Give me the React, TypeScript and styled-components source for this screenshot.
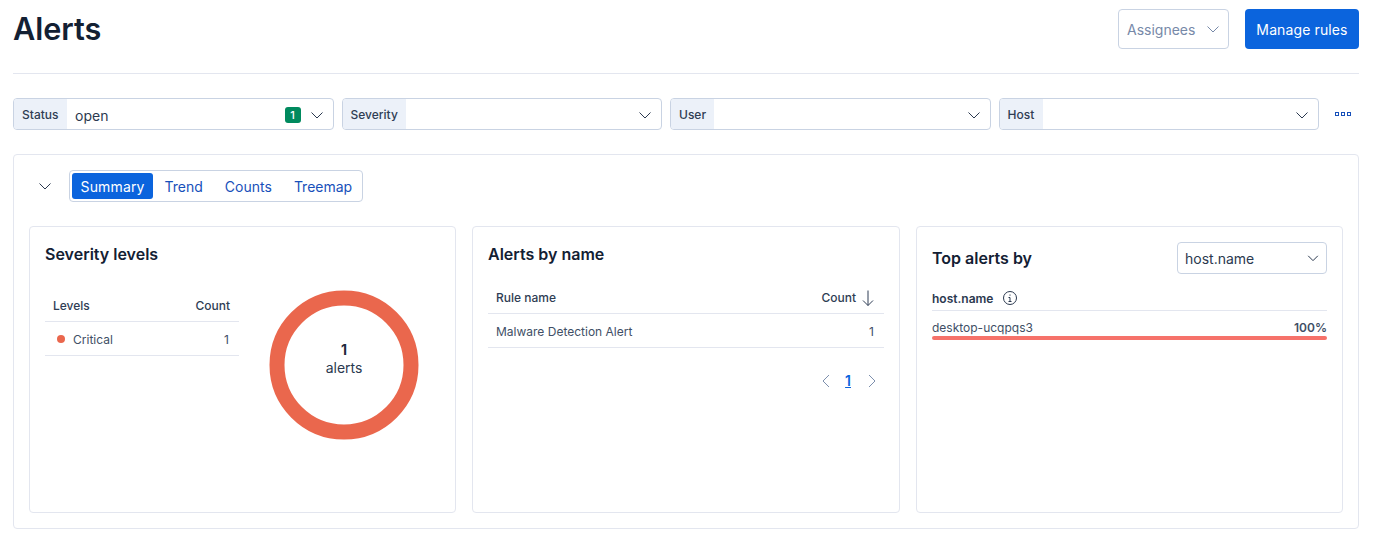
import React from "react";
import styled, { createGlobalStyle } from "styled-components";

const Global = createGlobalStyle`
  html, body { margin: 0; padding: 0; background: #fff; }
  body { font-family: Inter, "Liberation Sans", sans-serif; color: #1a1c21; }
  * { box-sizing: border-box; }
`;

const Page = styled.div`
  width: 1374px;
  height: 534px;
  padding: 0 15px 0 13px;
  overflow: hidden;
`;
const Header = styled.header`
  height: 74px;
  padding-top: 9px;
  display: flex;
  align-items: flex-start;
  border-bottom: 1px solid #e3e6ef;
`;
const Title = styled.h1`
  margin: 0;
  flex: 1;
  font-size: 30.6px;
  line-height: 40px;
  font-weight: 600;
  color: #132033;
`;
const HeaderActions = styled.div`
  display: flex;
  gap: 16px;
`;
const AssigneeSelect = styled.div`
  width: 111px;
  height: 40px;
  border: 1px solid #c9d3e3;
  border-radius: 4px;
  padding: 0 7px 0 8px;
  display: flex;
  align-items: center;
  justify-content: space-between;
  font-size: 14px;
  color: #7789a8;
`;
const PrimaryButton = styled.button`
  width: 114px;
  height: 40px;
  border: 0;
  border-radius: 4px;
  background: #0b64dd;
  color: #fff;
  font: 400 14px Inter, sans-serif;
  letter-spacing: 0.12px;
`;
const Filters = styled.div`
  margin-top: 24px;
  display: flex;
  align-items: center;
`;
const FilterGroup = styled.div`
  display: flex;
  gap: 8px;
  width: 1306px;
`;
const Filter = styled.div`
  flex: 1;
  height: 32px;
  display: flex;
  align-items: stretch;
  border: 1px solid #c9d3e3;
  border-radius: 4px;
  overflow: hidden;
`;
const FilterLabel = styled.span<{ $width: number }>`
  width: ${(p) => p.$width}px;
  background: #ecf1f9;
  padding-left: 8px;
  display: flex;
  align-items: center;
  font-size: 12px;
  font-weight: 500;
  color: #2f3d54;
`;
const FilterValue = styled.div`
  flex: 1;
  display: flex;
  align-items: center;
  padding: 1px 8px 0 8px;
  font-size: 14px;
  color: #2b394f;
  gap: 8px;
`;
const FilterText = styled.span`
  flex: 1;
  margin-top: 2px;
`;
const CountBadge = styled.span`
  width: 16px;
  height: 16px;
  border-radius: 3px;
  background: #008a5e;
  color: #fff;
  font-size: 11px;
  font-weight: 500;
  display: flex;
  align-items: center;
  justify-content: center;
`;
const MoreButton = styled.span`
  margin-left: 15px;
  display: flex;
  color: #1750ba;
`;
const Panel = styled.section`
  margin-top: 24px;
  height: 375px;
  border: 1px solid #e3e6ef;
  border-radius: 4px;
  padding: 15px;
`;
const TabRow = styled.div`
  display: flex;
  align-items: center;
  height: 32px;
`;
const Collapse = styled.span`
  width: 31px;
  margin-right: 9px;
  display: flex;
  justify-content: center;
  color: #2b394f;
`;
const Tabs = styled.div`
  height: 32px;
  border: 1px solid #c9d3e3;
  border-radius: 4px;
  padding: 2px;
  display: flex;
`;
const Tab = styled.span<{ $active?: boolean }>`
  height: 26px;
  border-radius: 3px;
  padding: 0 ${(p) => (p.$active ? "8.5px" : "10.5px 0 11.5px")};
  display: flex;
  align-items: center;
  font-size: 14px;
  font-weight: 400;
  letter-spacing: ${(p) => (p.$active ? "0.15px" : "0")};
  background: ${(p) => (p.$active ? "#0b64dd" : "transparent")};
  color: ${(p) => (p.$active ? "#fff" : "#1750ba")};
  &:last-child {
    padding-right: 8px;
  }
`;
const Cards = styled.div`
  margin-top: 24px;
  display: grid;
  grid-template-columns: 427px 428px 427px;
  gap: 16px;
`;
const Card = styled.article`
  height: 287px;
  border: 1px solid #e3e6ef;
  border-radius: 4px;
  padding: 15px;
`;
const CardTitle = styled.h3`
  margin: 0;
  font-size: 16px;
  line-height: 24px;
  font-weight: 600;
  color: #132033;
`;
const SeverityBody = styled.div`
  margin-top: 24px;
  display: flex;
`;
const MiniTable = styled.div`
  width: 194px;
`;
const HeadRow = styled.div`
  height: 32px;
  display: flex;
  align-items: center;
  justify-content: space-between;
  padding: 0 9px 0 8px;
  border-bottom: 1px solid #e3e6ef;
  font-size: 12px;
  font-weight: 500;
  color: #2f3d54;
`;
const BodyRow = styled.div`
  height: 34px;
  display: flex;
  align-items: center;
  justify-content: space-between;
  padding: 1px 10px 0 8px;
  border-bottom: 1px solid #e3e6ef;
  font-size: 12px;
  color: #414f66;
`;
const LevelCell = styled.span`
  display: flex;
  align-items: center;
  gap: 8px;
  padding-left: 4px;
`;
const Dot = styled.i`
  width: 8px;
  height: 8px;
  border-radius: 50%;
  background: #ea674d;
`;
const DonutWrap = styled.div`
  position: relative;
  margin: 0 0 0 30px;
  width: 150px;
  height: 150px;
`;
const DonutLabel = styled.div`
  position: absolute;
  inset: 0 0 13px;
  display: flex;
  flex-direction: column;
  align-items: center;
  justify-content: center;
  font-size: 14px;
  line-height: 18px;
  color: #2b394f;
`;
const DonutCount = styled.b`
  font-weight: 700;
  color: #1f2b3d;
`;
const NameTable = styled.div`
  margin-top: 16px;
`;
const SortHead = styled.span`
  display: flex;
  align-items: center;
  gap: 4px;
  margin-right: -1px;
`;
const Pager = styled.nav`
  margin-top: 24px;
  padding-right: 6px;
  display: flex;
  justify-content: flex-end;
  align-items: center;
  gap: 10px;
  color: #7d8fad;
`;
const PageNum = styled.a`
  font-size: 14px;
  font-weight: 600;
  color: #0b64dd;
  text-decoration: underline;
  padding: 0 5px 0 3px;
`;
const TopHead = styled.div`
  height: 32px;
  display: flex;
  align-items: center;
  justify-content: space-between;
`;
const FieldSelect = styled.div`
  width: 150px;
  height: 32px;
  border: 1px solid #c9d3e3;
  border-radius: 4px;
  padding: 0 6px 0 7px;
  display: flex;
  align-items: center;
  justify-content: space-between;
  font-size: 14px;
  color: #2b394f;
`;
const TopField = styled.div`
  margin-top: 12px;
  height: 25px;
  display: flex;
  align-items: center;
  gap: 9px;
  border-bottom: 1px solid #e3e6ef;
  font-size: 12px;
  font-weight: 600;
  color: #2b394f;
`;
const BarLabel = styled.div`
  margin-top: 9px;
  display: flex;
  justify-content: space-between;
  font-size: 12px;
  line-height: 16px;
  color: #414f66;
`;
const BarValue = styled.b`
  font-weight: 600;
`;
const Bar = styled.div`
  height: 4px;
  border-radius: 2px;
  background: #f6726a;
`;

const Chevron = ({ size = 16 }: { size?: number }) => (
  <svg width={size} height={size} viewBox="0 0 16 16" fill="none" stroke="currentColor" strokeWidth={16 / size}>
    <path d="M2.5 5.5 8 11l5.5-5.5" />
  </svg>
);
const PageArrow = ({ left }: { left?: boolean }) => (
  <svg width="12" height="16" viewBox="0 0 12 16" fill="none" stroke="currentColor" strokeWidth="1">
    <path d={left ? "M9 2 3 8l6 6" : "M3 2l6 6-6 6"} />
  </svg>
);

const filters = [
  { name: "Status", width: 53, value: "open", count: 1 },
  { name: "Severity", width: 63 },
  { name: "User", width: 43 },
  { name: "Host", width: 43 },
];

export default function App() {
  return (
    <Page>
      <Global />
      <Header>
        <Title>Alerts</Title>
        <HeaderActions>
          <AssigneeSelect>
            Assignees
            <Chevron />
          </AssigneeSelect>
          <PrimaryButton>Manage rules</PrimaryButton>
        </HeaderActions>
      </Header>
      <Filters>
        <FilterGroup>
          {filters.map((f) => (
            <Filter key={f.name}>
              <FilterLabel $width={f.width}>{f.name}</FilterLabel>
              <FilterValue>
                <FilterText>{f.value}</FilterText>
                {f.count && <CountBadge>{f.count}</CountBadge>}
                <Chevron />
              </FilterValue>
            </Filter>
          ))}
        </FilterGroup>
        <MoreButton>
          <svg width="18" height="6" viewBox="0 0 18 6" fill="none" stroke="currentColor" strokeWidth="1">
            <rect x="1.5" y="1.5" width="3" height="3" />
            <rect x="7.5" y="1.5" width="3" height="3" />
            <rect x="13.5" y="1.5" width="3" height="3" />
          </svg>
        </MoreButton>
      </Filters>
      <Panel>
        <TabRow>
          <Collapse>
            <Chevron />
          </Collapse>
          <Tabs>
            <Tab $active>Summary</Tab>
            <Tab>Trend</Tab>
            <Tab>Counts</Tab>
            <Tab>Treemap</Tab>
          </Tabs>
        </TabRow>
        <Cards>
          <Card>
            <CardTitle>Severity levels</CardTitle>
            <SeverityBody>
              <MiniTable>
                <HeadRow>
                  <span>Levels</span>
                  <span>Count</span>
                </HeadRow>
                <BodyRow>
                  <LevelCell>
                    <Dot />
                    Critical
                  </LevelCell>
                  <span>1</span>
                </BodyRow>
              </MiniTable>
              <DonutWrap>
                <svg width="150" height="150" viewBox="0 0 150 150">
                  <circle cx="75" cy="75" r="67" fill="none" stroke="#ea674d" strokeWidth="15" />
                </svg>
                <DonutLabel>
                  <DonutCount>1</DonutCount>
                  <span>alerts</span>
                </DonutLabel>
              </DonutWrap>
            </SeverityBody>
          </Card>
          <Card>
            <CardTitle>Alerts by name</CardTitle>
            <NameTable>
              <HeadRow>
                <span>Rule name</span>
                <SortHead>
                  Count
                  <svg width="16" height="16" viewBox="0 0 16 16" fill="none" stroke="currentColor" strokeWidth="1">
                    <path d="M8 .5v15M3 10.5l5 5 5-5" />
                  </svg>
                </SortHead>
              </HeadRow>
              <BodyRow>
                <span>Malware Detection Alert</span>
                <span>1</span>
              </BodyRow>
            </NameTable>
            <Pager>
              <PageArrow left />
              <PageNum>1</PageNum>
              <PageArrow />
            </Pager>
          </Card>
          <Card>
            <TopHead>
              <CardTitle>Top alerts by</CardTitle>
              <FieldSelect>
                host.name
                <Chevron size={14} />
              </FieldSelect>
            </TopHead>
            <TopField>
              host.name
              <svg width="16" height="16" viewBox="0 0 16 16" fill="none" stroke="currentColor" strokeWidth="1">
                <circle cx="8" cy="8" r="6.5" />
                <path d="M6.5 7.5H8V11.5M6.5 11.5H9.5M8 4.5v1.2" />
              </svg>
            </TopField>
            <BarLabel>
              <span>desktop-ucqpqs3</span>
              <BarValue>100%</BarValue>
            </BarLabel>
            <Bar />
          </Card>
        </Cards>
      </Panel>
    </Page>
  );
}
